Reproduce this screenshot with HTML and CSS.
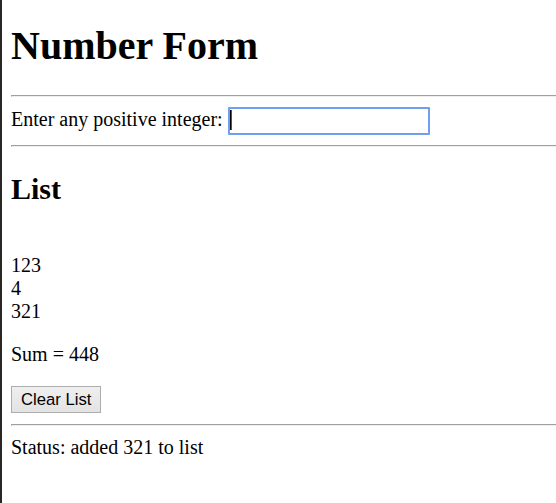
FILE: index.html
```html
<!DOCTYPE html>
<html>
<head>
<meta charset="utf-8">
<title>Number Form</title>
<link rel="stylesheet" href="styles.css">
</head>
<body>
<h1 class="title">Number Form</h1>
<hr class="rule">
<form class="entry">Enter any positive integer: <span class="field"><input class="num-input" type="text"><span class="caret"></span></span></form>
<hr class="rule">
<h2 class="subtitle">List</h2>
<p class="list"><br>123<br>4<br>321</p>
<p class="sum">Sum = 448</p>
<div class="actions"><button class="clear-btn" type="button">Clear List</button></div>
<hr class="rule">
<div class="status">Status: added 321 to list</div>
</body>
</html>
```

FILE: styles.css
```css
html {
  border-left: 2px solid #2a2623;
  min-height: 100%;
  box-sizing: border-box;
  background: #fff;
}
body {
  margin: 0 0 0 9px;
  font-family: "Liberation Serif", "Times New Roman", serif;
  font-size: 20px;
  line-height: 23px;
  color: #000;
}
.title {
  font-size: 40px;
  line-height: 46px;
  font-weight: bold;
  margin: 23px 0 26px;
}
.rule {
  height: 0;
  margin: 10px 0;
  border: none;
  border-top: 1px solid #a0a0a0;
  border-bottom: 1px solid #eeeeee;
  border-left: 1px solid #a0a0a0;
}
.entry {
  margin: 0;
}
.field {
  position: relative;
  display: inline-block;
}
.num-input {
  box-sizing: border-box;
  width: 202px;
  height: 28px;
  padding: 1px 2px;
  border: 2px solid #6f9ff0;
  border-radius: 1px;
  font-family: "Liberation Sans", Arial, sans-serif;
  font-size: 16.67px;
  outline: none;
}
.caret {
  position: absolute;
  left: 2px;
  top: 3px;
  width: 1px;
  height: 20px;
  background: #000;
  border-right: 1px solid #555;
}
.subtitle {
  font-size: 30px;
  line-height: 35px;
  font-weight: bold;
  margin: 24px 0 25px;
}
.list {
  margin: 20px 0;
}
.sum {
  margin: 20px 0;
}
.actions {
  margin: 0;
  padding-bottom: 1px;
  line-height: 0;
}
.clear-btn {
  box-sizing: border-box;
  height: 27px;
  padding: 0 9px;
  border: 1px solid #adadad;
  border-radius: 0;
  background: linear-gradient(#efefef, #e3e3e3);
  color: #000;
  font-family: "Liberation Sans", Arial, sans-serif;
  font-size: 16.67px;
  line-height: 20px;
}
.status {
  margin: 0;
}
```
